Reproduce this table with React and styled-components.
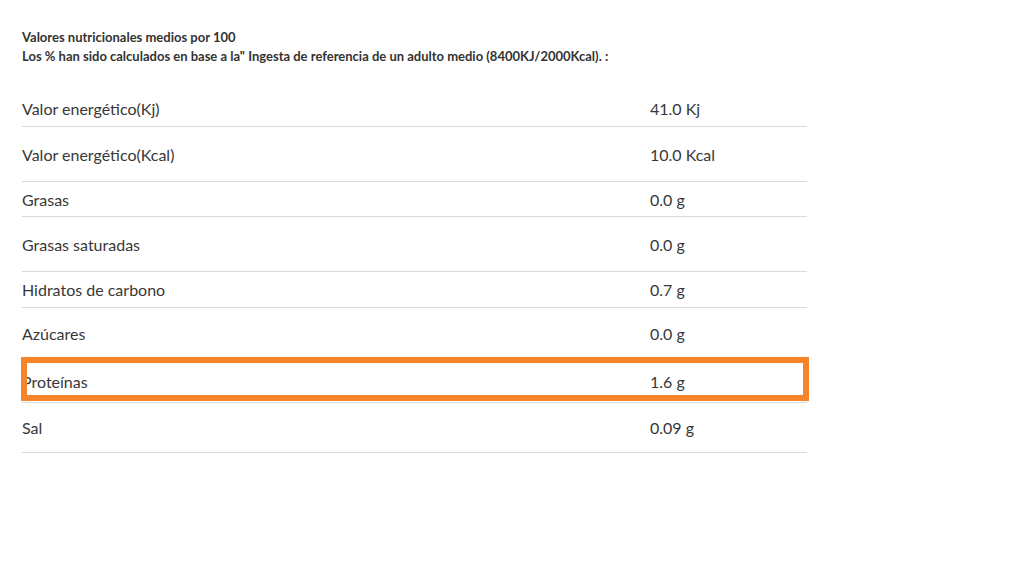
import React from "react";
import styled, { createGlobalStyle } from "styled-components";

const GlobalStyle = createGlobalStyle`
  body {
    margin: 0;
    background: #ffffff;
    font-family: "Lato", "Open Sans", sans-serif;
    color: #3a3a3a;
  }
`;

const Page = styled.div`
  padding: 30px 22px 0 22px;
  width: 785px;
`;

const Intro = styled.div`
  display: flex;
  flex-direction: column;
  gap: 4px;
  font-size: 13px;
  font-weight: 700;
  color: #333333;
  line-height: 15px;
`;

const Table = styled.div`
  display: flex;
  flex-direction: column;
  margin-top: 27px;
`;

const Row = styled.div`
  position: relative;
  display: grid;
  grid-template-columns: 628px 1fr;
  align-items: center;
  height: ${(p) => p.h}px;
  box-sizing: border-box;
  border-bottom: 1px solid #d9d9d9;
  font-size: 16px;
  color: #383838;

  /* orange highlight frame drawn over the row */
  ${(p) =>
    p.highlight &&
    `
    &::after {
      content: "";
      position: absolute;
      top: -3px;
      bottom: 1px;
      left: -1px;
      right: -2px;
      border: 6px solid #f5842b;
    }
  `}
`;

const Label = styled.span``;

const Value = styled.span``;

const rows = [
  { label: "Valor energético(Kj)", value: "41.0 Kj", h: 36 },
  { label: "Valor energético(Kcal)", value: "10.0 Kcal", h: 55 },
  { label: "Grasas", value: "0.0 g", h: 35 },
  { label: "Grasas saturadas", value: "0.0 g", h: 55 },
  { label: "Hidratos de carbono", value: "0.7 g", h: 36 },
  { label: "Azúcares", value: "0.0 g", h: 52 },
  { label: "Proteínas", value: "1.6 g", h: 43, highlight: true },
  { label: "Sal", value: "0.09 g", h: 50 },
];

const App = () => {
  return (
    <>
      <GlobalStyle />
      <Page>
        <Intro>
          <div>Valores nutricionales medios por 100</div>
          <div>
            Los % han sido calculados en base a la" Ingesta de referencia de un
            adulto medio (8400KJ/2000Kcal). :
          </div>
        </Intro>
        <Table>
          {rows.map((r) => (
            <Row key={r.label} h={r.h} highlight={r.highlight}>
              <Label>{r.label}</Label>
              <Value>{r.value}</Value>
            </Row>
          ))}
        </Table>
      </Page>
    </>
  );
};

export default App;
